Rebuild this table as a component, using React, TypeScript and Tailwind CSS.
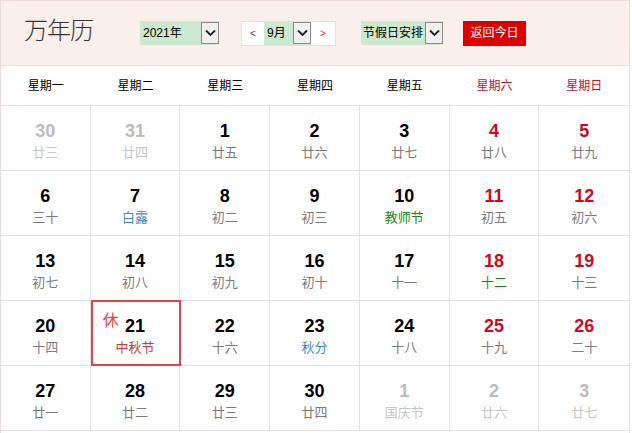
import React from "react";

type Cell = {
  d: number;
  l: string;
  faded?: boolean;
  weekend?: boolean;
  lc?: string;
  sel?: boolean;
};

const rows: Cell[][] = [
  [
    { d: 30, l: "廿三", faded: true },
    { d: 31, l: "廿四", faded: true },
    { d: 1, l: "廿五" },
    { d: 2, l: "廿六" },
    { d: 3, l: "廿七" },
    { d: 4, l: "廿八", weekend: true },
    { d: 5, l: "廿九", weekend: true },
  ],
  [
    { d: 6, l: "三十" },
    { d: 7, l: "白露", lc: "text-[#3a8bc5]" },
    { d: 8, l: "初二" },
    { d: 9, l: "初三" },
    { d: 10, l: "教师节", lc: "text-[#148a14]" },
    { d: 11, l: "初五", weekend: true },
    { d: 12, l: "初六", weekend: true },
  ],
  [
    { d: 13, l: "初七" },
    { d: 14, l: "初八" },
    { d: 15, l: "初九" },
    { d: 16, l: "初十" },
    { d: 17, l: "十一" },
    { d: 18, l: "十二", weekend: true, lc: "text-[#148a14]" },
    { d: 19, l: "十三", weekend: true },
  ],
  [
    { d: 20, l: "十四" },
    { d: 21, l: "中秋节", lc: "text-[#cc3340]", sel: true },
    { d: 22, l: "十六" },
    { d: 23, l: "秋分", lc: "text-[#3a8bc5]" },
    { d: 24, l: "十八" },
    { d: 25, l: "十九", weekend: true },
    { d: 26, l: "二十", weekend: true },
  ],
  [
    { d: 27, l: "廿一" },
    { d: 28, l: "廿二" },
    { d: 29, l: "廿三" },
    { d: 30, l: "廿四" },
    { d: 1, l: "国庆节", faded: true },
    { d: 2, l: "廿六", faded: true },
    { d: 3, l: "廿七", faded: true },
  ],
];

const weekdays = ["星期一", "星期二", "星期三", "星期四", "星期五", "星期六", "星期日"];

function Chevron() {
  return (
    <div className="w-[18px] h-[22px] border border-[#8a8a8a] bg-[#f0f0f0] flex items-center justify-center">
      <svg width="11" height="8" viewBox="0 0 11 8">
        <polyline points="1,1.5 5.5,6 10,1.5" fill="none" stroke="#222" strokeWidth="1.8" />
      </svg>
    </div>
  );
}

export default function App() {
  return (
    <div
      className="w-[630px] h-[433px] bg-white border-l border-r border-[#eadcdc] overflow-hidden"
      style={{ fontFamily: '"Liberation Sans", "Noto Sans CJK SC", sans-serif' }}
    >
      {/* header */}
      <div className="h-[66px] bg-[#fbefec] border-t border-b border-[#f0dcd8] flex items-center">
        <div className="ml-[23px] w-[116px] text-[24px] leading-none text-[#333] font-light -mt-[5px] tracking-[-1px]">
          万年历
        </div>
        <div className="flex items-center h-[24px] bg-[#cce8cf] pl-[3px] w-[79px] justify-between">
          <span className="text-[12px] text-black">2021年</span>
          <Chevron />
        </div>
        <div className="ml-[22px] flex items-center h-[25px] border border-[#e2e2e2] bg-white w-[95px]">
          <span className="w-[22px] text-center text-[10px] text-[#444]">&lt;</span>
          <div className="flex items-center h-full bg-[#cce8cf] pl-[3px] w-[47px] justify-between">
            <span className="text-[12px] text-black">9月</span>
            <Chevron />
          </div>
          <span className="flex-1 text-center text-[10px] text-[#e03030]">&gt;</span>
        </div>
        <div className="ml-[25px] flex items-center h-[24px] bg-[#cce8cf] pl-[2px] w-[82px] justify-between">
          <span className="text-[12px] text-black">节假日安排</span>
          <Chevron />
        </div>
        <button className="ml-[20px] h-[25px] w-[63px] bg-[#dc0000] text-white text-[12px] flex items-center justify-center">
          返回今日
        </button>
      </div>

      {/* weekday header */}
      <div className="grid grid-cols-7 h-[40px] border-b border-[#e6e0e0]">
        {weekdays.map((w, i) => (
          <div
            key={w}
            className={`flex items-center justify-center text-[12px] ${i >= 5 ? "text-[#c8101e]" : "text-black"}`}
          >
            {w}
          </div>
        ))}
      </div>

      {/* days */}
      {rows.map((row, ri) => (
        <div key={ri} className="grid grid-cols-7 h-[65px] border-b border-[#e3e3e3]">
          {row.map((c, ci) => {
            const numColor = c.faded
              ? "text-[#bbbbbb]"
              : c.weekend
              ? "text-[#cc0a1e]"
              : "text-black";
            const lunColor = c.faded ? "text-[#c4c4c4]" : c.lc ?? "text-[#7a7a7a]";
            return (
              <div
                key={ci}
                className={`relative flex flex-col items-center pt-[13px] ${ci < 6 ? "border-r border-[#e3e3e3]" : ""}`}
              >
                {c.sel && (
                  <>
                    <div className="absolute -top-px left-0 -right-[2px] -bottom-px border-2 border-[#e8404a]" />
                    <span className="absolute left-[12px] top-[10px] text-[16px] leading-5 text-[#e8424f]">休</span>
                  </>
                )}
                <span className={`text-[18px] leading-6 font-bold ${numColor}`}>{c.d}</span>
                <span className={`text-[13px] leading-5 ${lunColor}`}>{c.l}</span>
              </div>
            );
          })}
        </div>
      ))}
    </div>
  );
}
